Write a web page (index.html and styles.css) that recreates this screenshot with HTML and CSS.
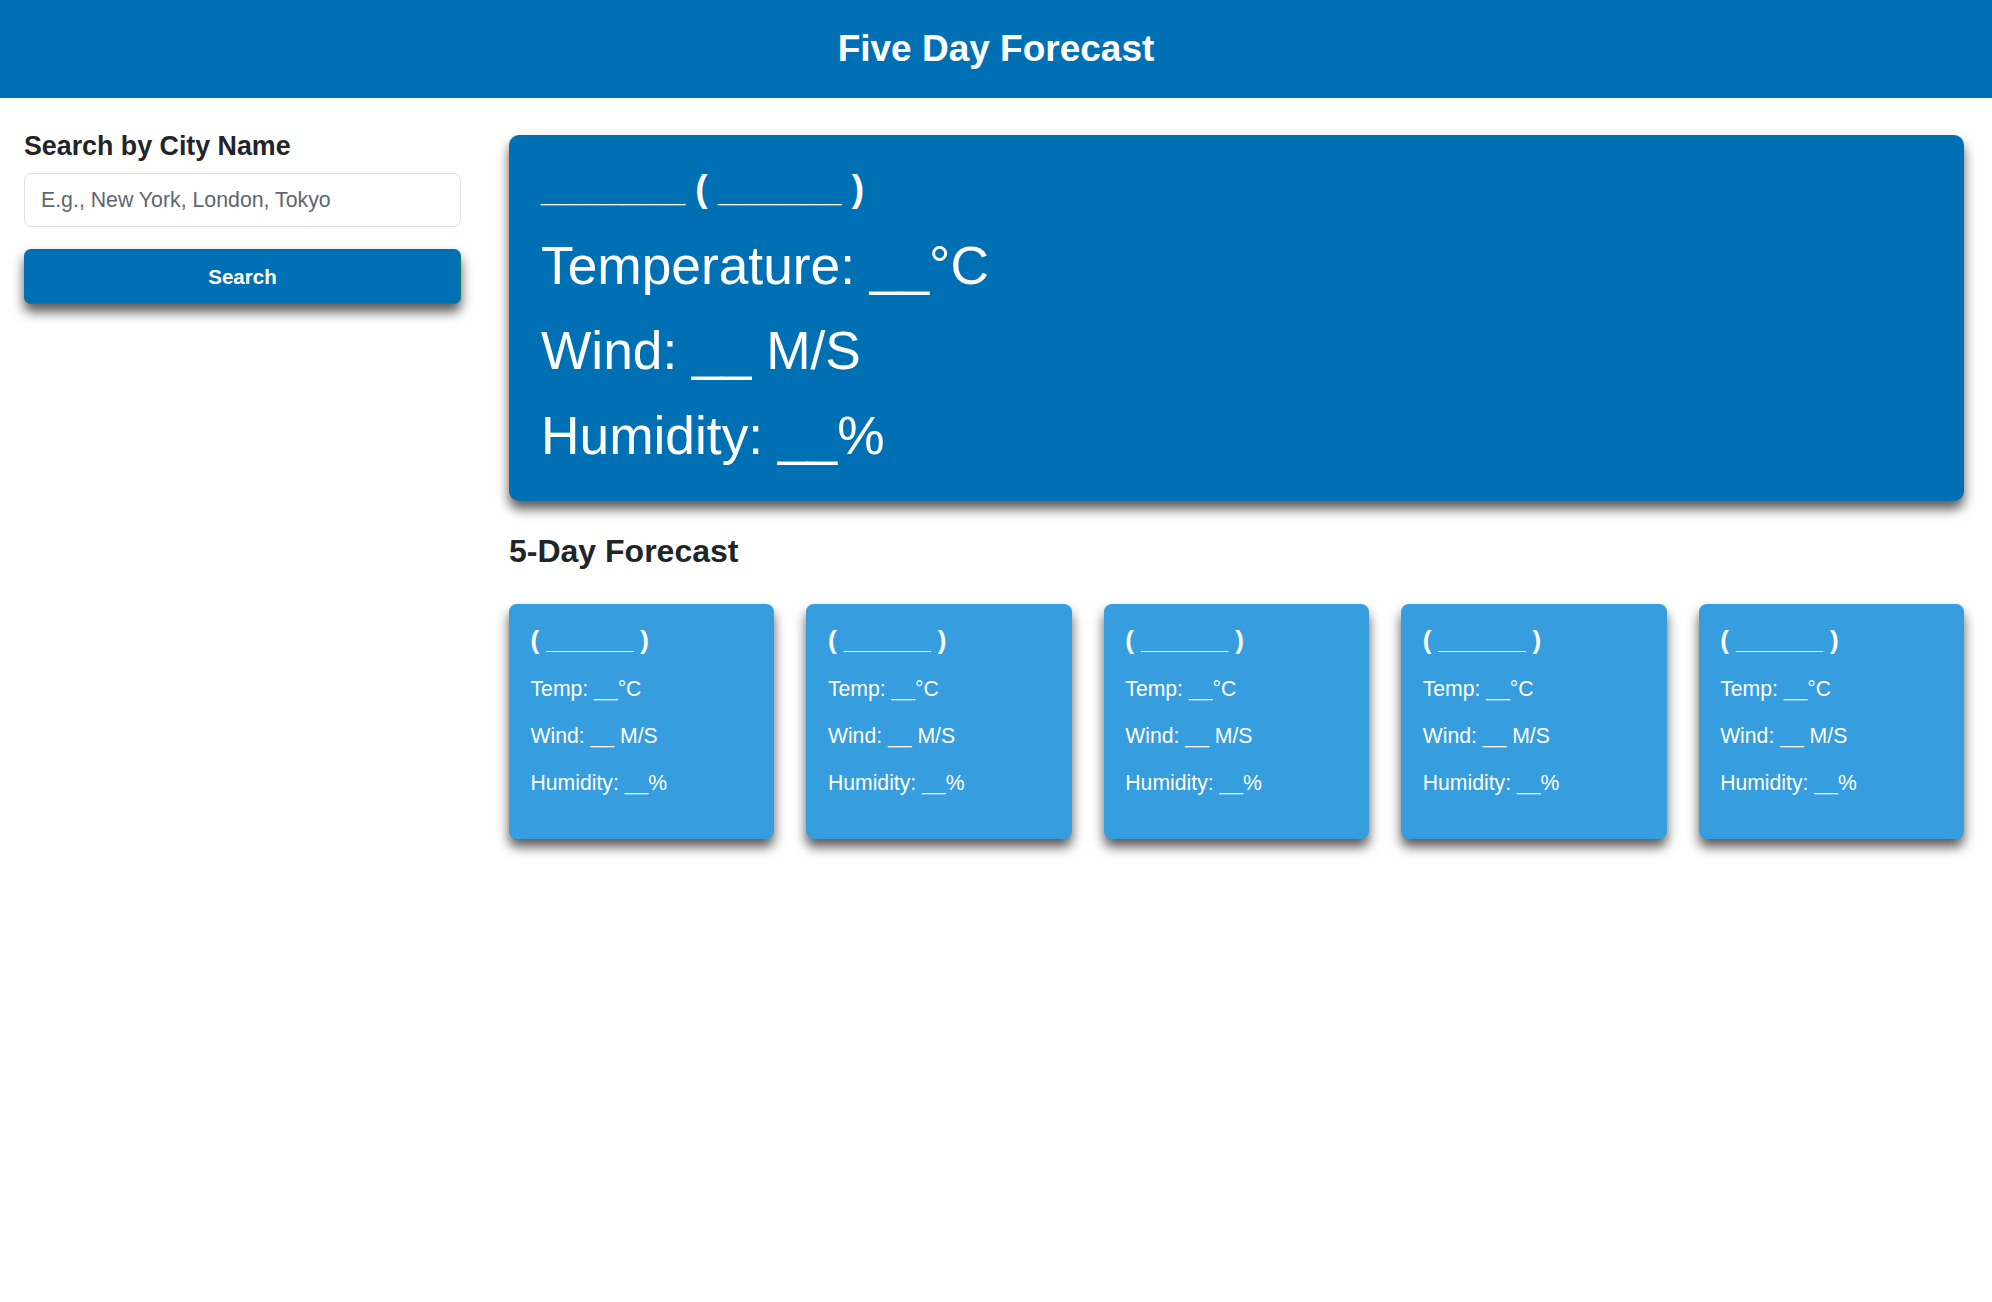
FILE: index.html
```html
<!DOCTYPE html>
<html lang="en">
<head>
<meta charset="utf-8">
<title>Five Day Forecast</title>
<link rel="stylesheet" href="styles.css">
</head>
<body>
<header class="topbar">
  <h1 class="topbar-title">Five Day Forecast</h1>
</header>
<main class="layout">
  <aside class="search">
    <h2 class="search-title">Search by City Name</h2>
    <input class="search-input" type="text" placeholder="E.g., New York, London, Tokyo">
    <button class="search-btn" type="button">Search</button>
  </aside>
  <section class="results">
    <div class="current">
      <h2 class="current-title">_______ ( ______ )</h2>
      <p class="current-line">Temperature: __°C</p>
      <p class="current-line">Wind: __ M/S</p>
      <p class="current-line last">Humidity: __%</p>
    </div>
    <h3 class="forecast-title">5-Day Forecast</h3>
    <div class="forecast">
      <div class="day">
        <h4 class="day-title">( ______ )</h4>
        <p class="day-line">Temp: __°C</p>
        <p class="day-line">Wind: __ M/S</p>
        <p class="day-line">Humidity: __%</p>
      </div>
      <div class="day">
        <h4 class="day-title">( ______ )</h4>
        <p class="day-line">Temp: __°C</p>
        <p class="day-line">Wind: __ M/S</p>
        <p class="day-line">Humidity: __%</p>
      </div>
      <div class="day">
        <h4 class="day-title">( ______ )</h4>
        <p class="day-line">Temp: __°C</p>
        <p class="day-line">Wind: __ M/S</p>
        <p class="day-line">Humidity: __%</p>
      </div>
      <div class="day">
        <h4 class="day-title">( ______ )</h4>
        <p class="day-line">Temp: __°C</p>
        <p class="day-line">Wind: __ M/S</p>
        <p class="day-line">Humidity: __%</p>
      </div>
      <div class="day">
        <h4 class="day-title">( ______ )</h4>
        <p class="day-line">Temp: __°C</p>
        <p class="day-line">Wind: __ M/S</p>
        <p class="day-line">Humidity: __%</p>
      </div>
    </div>
  </section>
</main>
</body>
</html>
```
FILE: styles.css
```css
* { box-sizing: border-box; }

html, body {
  margin: 0;
  padding: 0;
  background: #ffffff;
  font-family: "Liberation Sans", Arial, Helvetica, sans-serif;
  color: #212529;
}

body {
  min-height: 100vh;
}

.topbar {
  height: 98px;
  background: #0070b5;
  display: flex;
  align-items: center;
  justify-content: center;
}

.topbar-title {
  margin: 0;
  font-size: 37px;
  line-height: 1.2;
  font-weight: 700;
  color: #ffffff;
}

.layout {
  display: grid;
  grid-template-columns: 437px 1fr;
  column-gap: 48px;
  padding: 32px 28px 60px 24px;
}

.search {
  display: flex;
  flex-direction: column;
}

.search-title {
  margin: 0 0 11px;
  font-size: 26.8px;
  line-height: 1.2;
  font-weight: 700;
}

.search-input {
  height: 54px;
  width: 100%;
  padding: 0 16px;
  border: 1px solid #dee2e6;
  border-radius: 7px;
  font-family: inherit;
  font-size: 21.3px;
  color: #212529;
  background: #fff;
  outline: none;
}

.search-input::placeholder {
  color: #5f666d;
}

.search-btn {
  margin-top: 22px;
  height: 55px;
  width: 100%;
  background: #0070b5;
  border: 1px solid #1b7f5a;
  border-top-color: #0a6fa8;
  border-left-color: #0a6fa8;
  border-radius: 7px;
  color: #ffffff;
  font-family: inherit;
  font-size: 20.5px;
  font-weight: 700;
  box-shadow: 0 8px 12px rgba(0, 0, 0, 0.65);
}

.results {
  display: flex;
  flex-direction: column;
}

.current {
  margin-top: 5px;
  background: #0070b5;
  color: #ffffff;
  border-radius: 10px;
  padding: 32px 32px 34px;
  box-shadow: 0 8px 12px rgba(0, 0, 0, 0.65);
}

.current-title {
  margin: 0 0 25px;
  font-size: 37px;
  line-height: 1.17;
  font-weight: 700;
}

.current-line {
  margin: 0 0 23px;
  font-size: 53.3px;
  line-height: 62px;
}

.current-line.last {
  margin-bottom: 0;
}

.forecast-title {
  margin: 32px 0 34px;
  font-size: 32px;
  line-height: 1.16;
  font-weight: 700;
}

.forecast {
  display: flex;
  gap: 32px;
}

.day {
  flex: 1 1 0;
  background: #369ddf;
  color: #ffffff;
  border-radius: 8px;
  padding: 21px 21.5px 22px;
  box-shadow: 0 8px 12px rgba(0, 0, 0, 0.65);
}

.day-title {
  margin: 0 0 20px;
  font-size: 26px;
  line-height: 1.18;
  font-weight: 700;
}

.day-line {
  margin: 0 0 22px;
  font-size: 21.2px;
  line-height: 25px;
}
```
